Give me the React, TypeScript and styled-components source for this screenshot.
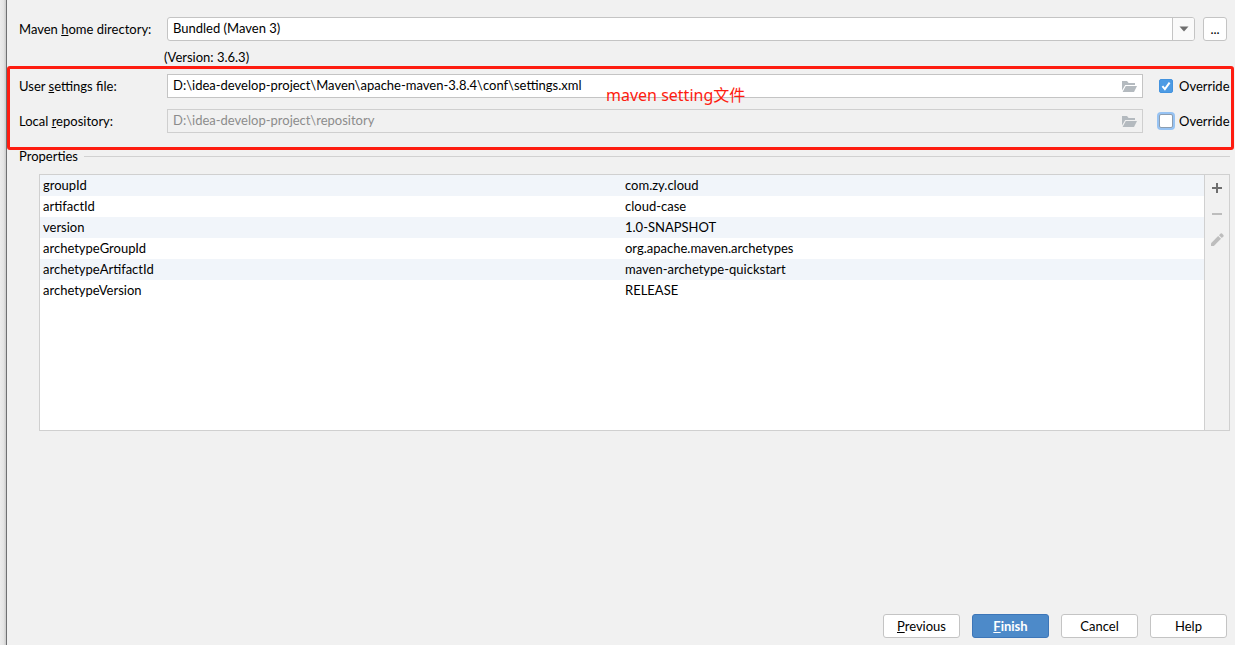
import React from "react";
import styled, { createGlobalStyle } from "styled-components";

const GlobalStyle = createGlobalStyle`
  *, *::before, *::after { box-sizing: border-box; }
  body {
    margin: 0;
    background: #f1f1f1;
    color: #000;
    font: 13px/20px Lato, "Noto Sans CJK SC", sans-serif;
  }
  button, input, select { font: inherit; color: inherit; margin: 0; }
`;

const Window = styled.div`
  display: flex;
  min-height: 100vh;
`;

const Gutter = styled.div`
  flex: none;
  width: 7px;
  border-right: 1px solid #6f7072;
  background: linear-gradient(to right, #ececec, #e4e4e4 60%, #cbcbcb);
`;

const Dialog = styled.main`
  flex: 1;
  min-width: 0;
  display: flex;
  flex-direction: column;
  padding: 17px 0 7px;
`;

const Row = styled.div`
  display: flex;
  align-items: center;
  height: 24px;
  padding: 0 5px 0 12px;
`;

const Label = styled.label`
  flex: none;
  width: 148px;
  white-space: nowrap;
`;

const Mnemonic = styled.span`
  text-decoration: underline;
  text-decoration-thickness: 1px;
  text-decoration-skip-ink: none;
  text-underline-offset: 1px;
`;

const Combo = styled.div`
  position: relative;
  flex: 1;
  height: 24px;
  margin-right: 8px;
`;

const Select = styled.select`
  appearance: none;
  width: 100%;
  height: 24px;
  padding: 0 28px 2px 5px;
  border: 1px solid #c4c4c4;
  border-radius: 3px;
  background: #fff;
  line-height: 20px;
`;

const ComboArrow = styled.span`
  position: absolute;
  top: 1px;
  right: 1px;
  bottom: 1px;
  width: 22px;
  display: flex;
  align-items: center;
  justify-content: center;
  border-left: 1px solid #c4c4c4;
  border-radius: 0 2px 2px 0;
  background: #fafafa;
  pointer-events: none;
`;

const Button = styled.button<{ $primary?: boolean }>`
  width: 77px;
  height: 24px;
  padding: 0;
  border: 1px solid ${(p) => (p.$primary ? "#3d76b8" : "#c4c4c4")};
  border-radius: 3px;
  background: ${(p) => (p.$primary ? "#4d8ac9" : "#fff")};
  color: ${(p) => (p.$primary ? "#fff" : "#000")};
  font-weight: ${(p) => (p.$primary ? 700 : 400)};
  line-height: 20px;
`;

const BrowseButton = styled(Button)`
  width: 24px;
  margin-right: 3px;
`;

const Version = styled.div`
  padding: 7px 0 0 157px;
  line-height: 18px;
`;

const Highlighted = styled.section`
  position: relative;
  display: flex;
  flex-direction: column;
  gap: 11px;
  padding: 8px 0 17px;
`;

const HighlightFrame = styled.div`
  position: absolute;
  inset: 0 1px 0 0;
  border: 3px solid #fe1c10;
  border-radius: 3px;
  pointer-events: none;
`;

const Note = styled.span`
  position: absolute;
  top: 17px;
  left: 599px;
  color: #fe1c10;
  font-family: "Noto Sans", "Noto Sans CJK SC", sans-serif;
  font-size: 16px;
  line-height: 24px;
  white-space: nowrap;
  pointer-events: none;
`;

const Field = styled.div<{ $disabled?: boolean }>`
  flex: 1;
  display: flex;
  align-items: center;
  height: 24px;
  padding-right: 5px;
  border: 1px solid ${(p) => (p.$disabled ? "#cfcfcf" : "#c4c4c4")};
  background: ${(p) => (p.$disabled ? "#f1f1f1" : "#fff")};
  color: ${(p) => (p.$disabled ? "#8c8c8c" : "#000")};
`;

const TextInput = styled.input`
  flex: 1;
  min-width: 0;
  height: 22px;
  padding: 0 5px 2px;
  border: 0;
  outline: 0;
  background: transparent;
`;

const IconButton = styled.button`
  display: flex;
  padding: 0;
  border: 0;
  background: transparent;
`;

const Override = styled.label`
  flex: none;
  display: flex;
  align-items: center;
  gap: 6px;
  width: 71px;
  margin-left: 16px;
  white-space: nowrap;
`;

const CheckCell = styled.span`
  position: relative;
  display: flex;
`;

const Checkbox = styled.input<{ $focused?: boolean }>`
  appearance: none;
  width: 14px;
  height: 14px;
  border: 1px solid #8c9db0;
  border-radius: 2px;
  background: #fff;
  outline: 0;
  box-shadow: ${(p) => (p.$focused ? "0 0 0 2px #97c3f3" : "none")};
  &:checked {
    border-color: #4393df;
    background: #4d9be4;
  }
`;

const CheckMark = styled.svg`
  position: absolute;
  inset: 0;
  pointer-events: none;
`;

const GroupTitle = styled.h2`
  display: flex;
  align-items: center;
  gap: 6px;
  margin: 0;
  padding: 0 5px 0 12px;
  height: 12px;
  font-size: 13px;
  font-weight: 400;
  &::after {
    content: "";
    flex: 1;
    border-top: 1px solid #d1d1d1;
  }
`;

const Panel = styled.section`
  display: flex;
  min-height: 257px;
  margin: 12px 5px 24px 32px;
  border: 1px solid #d0d0d0;
  background: #fff;
`;

const TableArea = styled.div`
  flex: 1;
`;

const Table = styled.table`
  width: 100%;
  table-layout: fixed;
  border-collapse: collapse;
`;

const TableRow = styled.tr`
  height: 21px;
  &:nth-child(odd) { background: #f1f5fa; }
`;

const Cell = styled.td`
  padding: 0 3px;
  line-height: 21px;
`;

const Tools = styled.div`
  flex: none;
  display: flex;
  flex-direction: column;
  align-items: center;
  gap: 10px;
  width: 25px;
  padding-top: 5px;
  border-left: 1px solid #d0d0d0;
  background: #f1f1f1;
`;

const Footer = styled.footer`
  display: flex;
  justify-content: flex-end;
  gap: 12px;
  margin-top: auto;
  padding-right: 8px;
`;

const FolderIcon = () => (
  <svg width="16" height="16" viewBox="0 0 16 16" fill="#b4babf">
    <path d="M1 12.6V3h5l1.600 2H14v2H4.200z" />
    <path d="M4.800 8H16l-3 6H1.600z" />
  </svg>
);

const properties = [
  ["groupId", "com.zy.cloud"],
  ["artifactId", "cloud-case"],
  ["version", "1.0-SNAPSHOT"],
  ["archetypeGroupId", "org.apache.maven.archetypes"],
  ["archetypeArtifactId", "maven-archetype-quickstart"],
  ["archetypeVersion", "RELEASE"],
];

interface PathRowProps {
  id: string;
  label: React.ReactNode;
  value: string;
  overridden?: boolean;
}

const PathRow = ({ id, label, value, overridden }: PathRowProps) => (
  <Row>
    <Label htmlFor={id}>{label}</Label>
    <Field $disabled={!overridden}>
      <TextInput id={id} type="text" defaultValue={value} disabled={!overridden} />
      <IconButton type="button" aria-label="Browse" disabled={!overridden}>
        <FolderIcon />
      </IconButton>
    </Field>
    <Override>
      <CheckCell>
        <Checkbox type="checkbox" defaultChecked={overridden} $focused={!overridden} />
        {overridden && (
          <CheckMark width="14" height="14" viewBox="0 0 14 14">
            <path d="M3.4 7.2l2.5 2.9 4.7-6.4" fill="none" stroke="#fff" strokeWidth="2" />
          </CheckMark>
        )}
      </CheckCell>
      Override
    </Override>
  </Row>
);

export default function App() {
  return (
    <>
      <GlobalStyle />
      <Window>
        <Gutter />
        <Dialog>
          <Row>
            <Label htmlFor="home">
              Maven <Mnemonic>h</Mnemonic>ome directory:
            </Label>
            <Combo>
              <Select id="home">
                <option>Bundled (Maven 3)</option>
              </Select>
              <ComboArrow>
                <svg width="10" height="6" viewBox="0 0 10 6">
                  <path d="M0.5 0.5h9L5 5.5z" fill="#6e6e6e" />
                </svg>
              </ComboArrow>
            </Combo>
            <BrowseButton type="button">...</BrowseButton>
          </Row>
          <Version>(Version: 3.6.3)</Version>

          <Highlighted>
            <PathRow
              id="settings"
              label={<>User <Mnemonic>s</Mnemonic>ettings file:</>}
              value="D:\idea-develop-project\Maven\apache-maven-3.8.4\conf\settings.xml"
              overridden
            />
            <PathRow
              id="repository"
              label={<>Local <Mnemonic>r</Mnemonic>epository:</>}
              value="D:\idea-develop-project\repository"
            />
            <HighlightFrame />
            <Note>maven setting文件</Note>
          </Highlighted>

          <GroupTitle>Properties</GroupTitle>
          <Panel>
            <TableArea>
              <Table>
                <tbody>
                  {properties.map(([name, value]) => (
                    <TableRow key={name}>
                      <Cell>{name}</Cell>
                      <Cell>{value}</Cell>
                    </TableRow>
                  ))}
                </tbody>
              </Table>
            </TableArea>
            <Tools>
              <IconButton type="button" aria-label="Add">
                <svg width="16" height="16" viewBox="0 0 16 16" fill="#6e6e6e">
                  <path d="M7 3h2v4h4v2H9v4H7V9H3V7h4z" />
                </svg>
              </IconButton>
              <IconButton type="button" aria-label="Remove" disabled>
                <svg width="16" height="16" viewBox="0 0 16 16" fill="#bdbdbd">
                  <path d="M3 7h10v2H3z" />
                </svg>
              </IconButton>
              <IconButton type="button" aria-label="Edit" disabled>
                <svg width="16" height="16" viewBox="0 0 16 16" fill="#bdbdbd">
                  <path d="M2 11.2L9.2 4 12 6.8 4.8 14H2z" />
                  <path d="M10 3.2l1.6-1.6q.7-.6 1.4 0L14.4 3q.6.7 0 1.400L12.8 6z" />
                </svg>
              </IconButton>
            </Tools>
          </Panel>

          <Footer>
            <Button type="button"><Mnemonic>P</Mnemonic>revious</Button>
            <Button type="button" $primary><Mnemonic>F</Mnemonic>inish</Button>
            <Button type="button">Cancel</Button>
            <Button type="button">Help</Button>
          </Footer>
        </Dialog>
      </Window>
    </>
  );
}
